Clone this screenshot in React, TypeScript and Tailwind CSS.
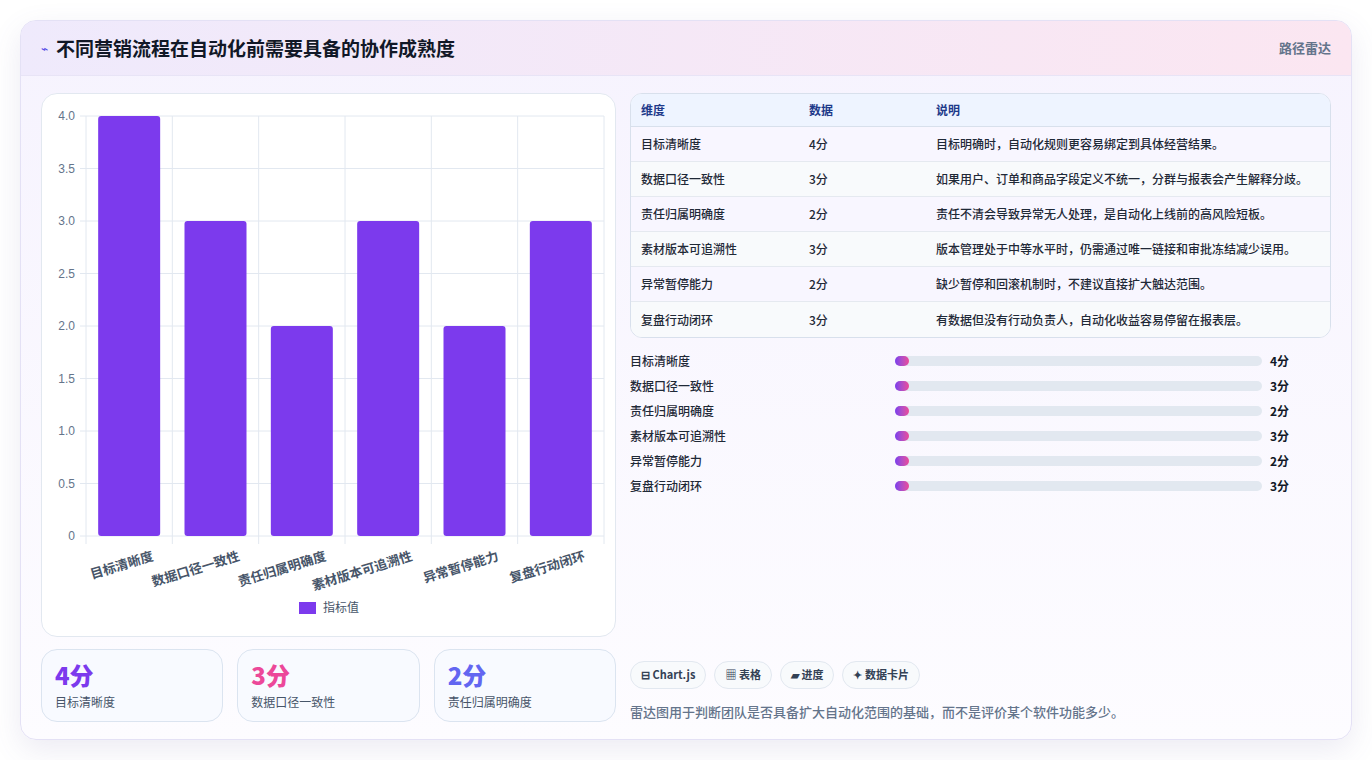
import React from "react";

const data = [
  { n: "目标清晰度", v: 4, d: "目标明确时，自动化规则更容易绑定到具体经营结果。" },
  { n: "数据口径一致性", v: 3, d: "如果用户、订单和商品字段定义不统一，分群与报表会产生解释分歧。" },
  { n: "责任归属明确度", v: 2, d: "责任不清会导致异常无人处理，是自动化上线前的高风险短板。" },
  { n: "素材版本可追溯性", v: 3, d: "版本管理处于中等水平时，仍需通过唯一链接和审批冻结减少误用。" },
  { n: "异常暂停能力", v: 2, d: "缺少暂停和回滚机制时，不建议直接扩大触达范围。" },
  { n: "复盘行动闭环", v: 3, d: "有数据但没有行动负责人，自动化收益容易停留在报表层。" },
];

const font = { fontFamily: '"Noto Sans CJK SC", "Noto Sans", sans-serif' };

function Chart() {
  const x0 = 44, x1 = 562, y0 = 22, h = 420;
  const cw = (x1 - x0) / 6;
  const ticks = [0, 0.5, 1, 1.5, 2, 2.5, 3, 3.5, 4];
  return (
    <svg width="575" height="543" className="block">
      {ticks.map((t) => {
        const y = y0 + h - (t / 4) * h;
        return (
          <g key={t}>
            <line x1={x0 - 6} x2={x1} y1={y} y2={y} stroke="#e2e8f0" />
            <text x={x0 - 11} y={y + 4} textAnchor="end" fontSize="12" fill="#64748b" fontFamily="Liberation Sans, sans-serif">
              {t === 0 ? "0" : t.toFixed(1)}
            </text>
          </g>
        );
      })}
      {Array.from({ length: 7 }).map((_, i) => (
        <line key={i} x1={x0 + i * cw} x2={x0 + i * cw} y1={y0} y2={y0 + h + 8} stroke="#e2e8f0" />
      ))}
      {data.map((d, i) => {
        const bh = (d.v / 4) * h;
        const cx = x0 + i * cw + cw / 2;
        return (
          <g key={d.n}>
            <rect x={cx - 31} y={y0 + h - bh} width="62" height={bh} rx="3" fill="#7c3aed" />
            <text
              x={cx + 25}
              y={y0 + h + 24}
              textAnchor="end"
              fontSize="13"
              fontWeight="600"
              fill="#475569"
              transform={`rotate(-17 ${cx + 25} ${y0 + h + 24})`}
              style={font}
            >
              {d.n}
            </text>
          </g>
        );
      })}
      <rect x="257" y="508" width="17" height="12" fill="#7c3aed" />
      <text x="281" y="518" fontSize="12" fill="#475569" style={font}>指标值</text>
    </svg>
  );
}

export default function App() {
  return (
    <div className="w-[1372px] h-[760px] bg-white p-5" style={font}>
      <div className="h-[720px] rounded-2xl border border-[#e4e1f5] overflow-hidden shadow-[0_10px_30px_rgba(100,90,160,0.12)] bg-gradient-to-b from-[#f6f3fe] to-[#fdfcff] flex flex-col">
        <div className="h-[55px] shrink-0 flex items-center justify-between px-5 bg-gradient-to-r from-[#efeafc] to-[#fbe6f1] border-b border-[#e8e4f6]">
          <div className="flex items-center gap-2">
            <span className="text-[#4f46e5] text-xs">⌁</span>
            <span className="text-[19px] font-bold text-[#111827]">不同营销流程在自动化前需要具备的协作成熟度</span>
          </div>
          <span className="text-[13px] font-semibold text-[#64748b]">路径雷达</span>
        </div>
        <div className="flex-1 flex gap-[14px] px-5 pt-[17px] pb-5">
          <div className="w-[575px] flex flex-col gap-3">
            <div className="h-[544px] bg-white rounded-2xl border border-[#e2e8f0]">
              <Chart />
            </div>
            <div className="grid grid-cols-3 gap-[14px]">
              {[
                ["4分", "目标清晰度", "text-[#7c3aed]"],
                ["3分", "数据口径一致性", "text-[#ec4899]"],
                ["2分", "责任归属明确度", "text-[#6366f1]"],
              ].map(([v, l, c]) => (
                <div key={l} className="h-[73px] rounded-2xl border border-[#dbe4f0] bg-[#f8faff] px-[13px] pt-[10px]">
                  <div className={`text-[24px] font-extrabold leading-[30px] ${c}`}>{v}</div>
                  <div className="text-[12px] text-[#475569] mt-[3px]">{l}</div>
                </div>
              ))}
            </div>
          </div>
          <div className="flex-1 flex flex-col">
            <div className="rounded-xl border border-[#d8e0ec] overflow-hidden bg-white">
              <div className="h-[33px] flex items-center bg-[#eef4ff] border-b border-[#d8e0ec] text-[12px] font-semibold text-[#1e3a8a]">
                <div className="w-[178px] pl-[10px]">维度</div>
                <div className="w-[127px]">数据</div>
                <div>说明</div>
              </div>
              {data.map((d, i) => (
                <div key={d.n} className={`h-[35px] flex items-center text-[12px] font-medium text-[#1f2937] ${i < 5 ? "border-b border-[#e5e9f0]" : ""} ${i % 2 === 0 ? "bg-[#f8f6ff]" : "bg-[#f8fafc]"}`}>
                  <div className="w-[178px] pl-[10px]">{d.n}</div>
                  <div className="w-[127px]">{d.v}分</div>
                  <div>{d.d}</div>
                </div>
              ))}
            </div>
            <div className="mt-[10px] flex flex-col">
              {data.map((d) => (
                <div key={d.n} className="h-[25px] flex items-center text-[12px] font-medium text-[#1f2937]">
                  <div className="w-[265px]">{d.n}</div>
                  <div className="w-[367px] h-[10px] rounded-full bg-[#e2e8f0]">
                    <div className="w-[14px] h-[10px] rounded-full bg-gradient-to-r from-[#7c3aed] to-[#ec4899]" />
                  </div>
                  <div className="ml-2 font-bold text-[#111827]">{d.v}分</div>
                </div>
              ))}
            </div>
            <div className="flex-1" />
            <div className="flex gap-2 mb-[13px]">
              {["⊟ Chart.js", "▦ 表格", "▰ 进度", "✦ 数据卡片"].map((t) => (
                <span key={t} className="h-[28px] px-[10px] flex items-center rounded-full border border-[#e2e8f0] bg-[#f8fafc] text-[11px] font-semibold text-[#334155]">{t}</span>
              ))}
            </div>
            <div className="text-[13px] font-medium text-[#64748b] mb-[1px]">雷达图用于判断团队是否具备扩大自动化范围的基础，而不是评价某个软件功能多少。</div>
          </div>
        </div>
      </div>
    </div>
  );
}
